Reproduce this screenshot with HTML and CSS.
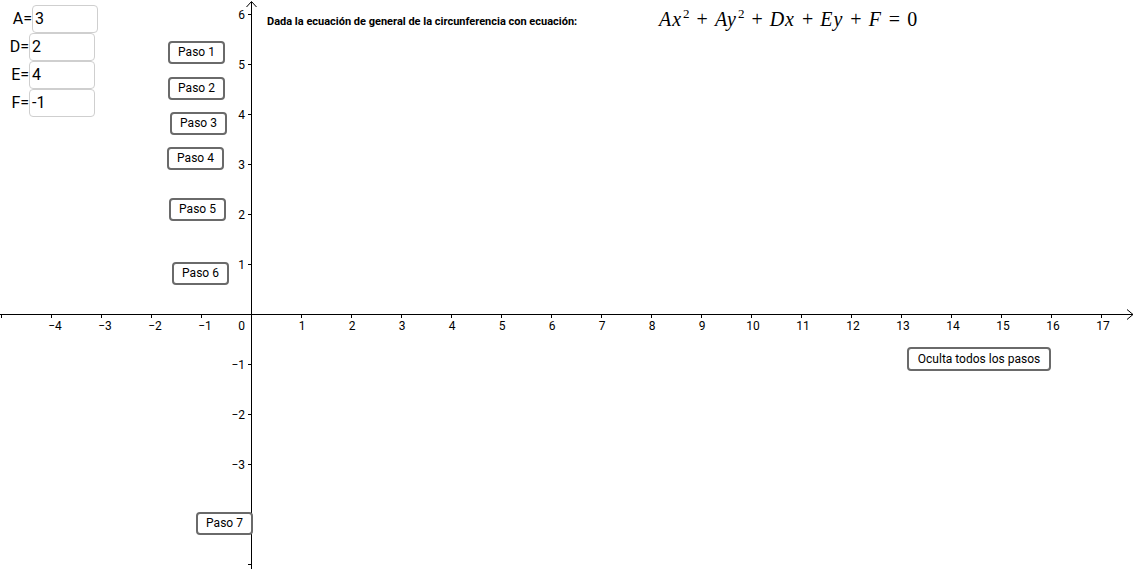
FILE: index.html
```html
<!DOCTYPE html>
<html lang="es">
<head>
<meta charset="utf-8">
<title>Circunferencia</title>
<link rel="stylesheet" href="styles.css">
</head>
<body>
<div class="app">
  <svg class="axes" width="1135" height="569" viewBox="0 0 1135 569">
    <g stroke="#000" stroke-width="1" fill="none" shape-rendering="crispEdges">
      <line x1="0" y1="314.5" x2="1133" y2="314.5"/>
      <line x1="251.5" y1="2" x2="251.5" y2="569"/>
    </g>
    <g stroke="#000" stroke-width="1" fill="none">
      <polyline points="1127,309.5 1133,314.5 1127,319.5"/>
      <polyline points="246.5,7 251.5,1.5 256.5,7"/>
    </g>
    <g stroke="#000" stroke-width="1" shape-rendering="crispEdges">
      <line x1="1.5" y1="314" x2="1.5" y2="318"/>
      <line x1="51.5" y1="314" x2="51.5" y2="318"/>
      <line x1="101.5" y1="314" x2="101.5" y2="318"/>
      <line x1="151.5" y1="314" x2="151.5" y2="318"/>
      <line x1="201.5" y1="314" x2="201.5" y2="318"/>
      <line x1="301.5" y1="314" x2="301.5" y2="318"/>
      <line x1="351.5" y1="314" x2="351.5" y2="318"/>
      <line x1="401.5" y1="314" x2="401.5" y2="318"/>
      <line x1="451.5" y1="314" x2="451.5" y2="318"/>
      <line x1="501.5" y1="314" x2="501.5" y2="318"/>
      <line x1="551.5" y1="314" x2="551.5" y2="318"/>
      <line x1="601.5" y1="314" x2="601.5" y2="318"/>
      <line x1="651.5" y1="314" x2="651.5" y2="318"/>
      <line x1="701.5" y1="314" x2="701.5" y2="318"/>
      <line x1="751.5" y1="314" x2="751.5" y2="318"/>
      <line x1="801.5" y1="314" x2="801.5" y2="318"/>
      <line x1="851.5" y1="314" x2="851.5" y2="318"/>
      <line x1="901.5" y1="314" x2="901.5" y2="318"/>
      <line x1="951.5" y1="314" x2="951.5" y2="318"/>
      <line x1="1001.5" y1="314" x2="1001.5" y2="318"/>
      <line x1="1051.5" y1="314" x2="1051.5" y2="318"/>
      <line x1="1101.5" y1="314" x2="1101.5" y2="318"/>
      <line x1="248" y1="14.5" x2="252" y2="14.5"/>
      <line x1="248" y1="64.5" x2="252" y2="64.5"/>
      <line x1="248" y1="114.5" x2="252" y2="114.5"/>
      <line x1="248" y1="164.5" x2="252" y2="164.5"/>
      <line x1="248" y1="214.5" x2="252" y2="214.5"/>
      <line x1="248" y1="264.5" x2="252" y2="264.5"/>
      <line x1="248" y1="364.5" x2="252" y2="364.5"/>
      <line x1="248" y1="414.5" x2="252" y2="414.5"/>
      <line x1="248" y1="464.5" x2="252" y2="464.5"/>
      <line x1="248" y1="514.5" x2="252" y2="514.5"/>
      <line x1="248" y1="564.5" x2="252" y2="564.5"/>
    </g>
    <g class="xlab" text-anchor="middle">
      <text x="55" y="330">−4</text>
      <text x="105" y="330">−3</text>
      <text x="155" y="330">−2</text>
      <text x="205" y="330">−1</text>
      <text x="241.5" y="330">0</text>
      <text x="302" y="330">1</text>
      <text x="352" y="330">2</text>
      <text x="402" y="330">3</text>
      <text x="452" y="330">4</text>
      <text x="502" y="330">5</text>
      <text x="552" y="330">6</text>
      <text x="602" y="330">7</text>
      <text x="652" y="330">8</text>
      <text x="702" y="330">9</text>
      <text x="753" y="330">10</text>
      <text x="803" y="330">11</text>
      <text x="853" y="330">12</text>
      <text x="903" y="330">13</text>
      <text x="953" y="330">14</text>
      <text x="1003" y="330">15</text>
      <text x="1053" y="330">16</text>
      <text x="1103" y="330">17</text>
    </g>
    <g class="ylab" text-anchor="end">
      <text x="245" y="19">6</text>
      <text x="245" y="69">5</text>
      <text x="245" y="119">4</text>
      <text x="245" y="169">3</text>
      <text x="245" y="219">2</text>
      <text x="245" y="269">1</text>
      <text x="245" y="369">−1</text>
      <text x="245" y="419">−2</text>
      <text x="245" y="469">−3</text>
    </g>
  </svg>

  <div class="inputs">
    <div class="row row-a"><span class="lbl">A=</span><span class="box">3</span></div>
    <div class="row"><span class="lbl">D=</span><span class="box">2</span></div>
    <div class="row"><span class="lbl">E=</span><span class="box">4</span></div>
    <div class="row"><span class="lbl">F=</span><span class="box">-1</span></div>
  </div>

  <button class="btn p1">Paso 1</button>
  <button class="btn p2">Paso 2</button>
  <button class="btn p3">Paso 3</button>
  <button class="btn p4">Paso 4</button>
  <button class="btn p5">Paso 5</button>
  <button class="btn p6">Paso 6</button>
  <button class="btn p7">Paso 7</button>
  <button class="btn hide-all">Oculta todos los pasos</button>

  <div class="title">Dada la ecuación de general de la circunferencia con ecuación:</div>
  <div class="formula"><i>Ax</i><sup>2</sup><span class="op">+</span><i>Ay</i><sup>2</sup><span class="op">+</span><i>Dx</i><span class="op">+</span><i>Ey</i><span class="op">+</span><i>F</i><span class="op">=</span>0</div>
</div>
</body>
</html>
```
FILE: styles.css
```css
html, body {
  margin: 0;
  padding: 0;
  background: #fff;
}
.app {
  position: relative;
  width: 1135px;
  height: 569px;
  overflow: hidden;
  background: #fff;
  font-family: Roboto, "Liberation Sans", sans-serif;
  color: #000;
}
.axes {
  position: absolute;
  left: 0;
  top: 0;
}
.xlab text, .ylab text {
  font-family: Roboto, "Liberation Sans", sans-serif;
  font-size: 12px;
  fill: #000;
}
.inputs {
  position: absolute;
  left: 0;
  top: 5px;
  display: flex;
  flex-direction: column;
}
.row {
  display: flex;
  align-items: center;
  height: 28px;
}
.lbl {
  width: 29px;
  text-align: right;
  font-size: 16px;
  line-height: 28px;
}
.row-a .lbl { width: 32px; }
.box {
  box-sizing: border-box;
  width: 66px;
  height: 28px;
  border: 1px solid #cfcfcf;
  border-radius: 4px;
  font-size: 16px;
  line-height: 26px;
  padding-left: 2px;
  background: #fff;
}
.btn {
  position: absolute;
  box-sizing: border-box;
  height: 23px;
  width: 57px;
  padding: 0;
  margin: 0;
  background: #fff;
  border: 2px solid #6a6a6a;
  border-radius: 4px;
  font-family: Roboto, "Liberation Sans", sans-serif;
  font-size: 12px;
  color: #000;
  text-align: center;
  line-height: 19px;
}
.p1 { left: 168px; top: 41px; }
.p2 { left: 168px; top: 77px; }
.p3 { left: 170px; top: 112px; }
.p4 { left: 167px; top: 147px; }
.p5 { left: 169px; top: 198px; }
.p6 { left: 172px; top: 262px; }
.p7 { left: 196px; top: 512px; }
.hide-all { left: 907px; top: 347px; width: 144px; height: 24px; }
.title {
  position: absolute;
  left: 267px;
  top: 15px;
  font-size: 11px;
  font-weight: bold;
  line-height: 14px;
  white-space: nowrap;
}
.formula {
  position: absolute;
  left: 659px;
  top: 6px;
  font-family: "Liberation Serif", "DejaVu Serif", serif;
  font-size: 20px;
  line-height: 26px;
  white-space: nowrap;
}
.formula i {
  letter-spacing: 1px;
}
.formula .op {
  margin: 0 7px;
}
.formula sup {
  font-size: 13px;
  vertical-align: 8px;
  line-height: 0;
  margin-left: 1px;
}
```
